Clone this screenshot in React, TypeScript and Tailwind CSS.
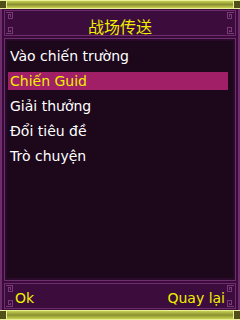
import React from "react";

const Key = ({ className }: { className: string }) => (
  <svg className={className} width="7" height="7" viewBox="0 0 7 7" shapeRendering="crispEdges">
    <path d="M0 0.5H6.5V6.5H2.5V2.5H4.5V4.5" fill="none" stroke="#7a3a7a" strokeWidth="1" />
  </svg>
);

const GoldBar = ({ h }: { h: string }) => (
  <div className={`${h} w-full border-y border-[#e8f098] bg-[linear-gradient(to_bottom,#c8d050,#8a9030_50%,#c8d050)] flex items-stretch justify-between`}>
    <div className="w-[7px] border-r border-[#e8f098] bg-[#505018]" />
    <div className="w-[7px] border-l border-[#e8f098] bg-[#505018]" />
  </div>
);

export default function App() {
  const items = ["Vào chiến trường", "Chiến Guid", "Giải thưởng", "Đổi tiêu đề", "Trò chuyện"];
  return (
    <div className="w-[240px] h-[320px] bg-[#3a0b3a] flex flex-col overflow-hidden" style={{ fontFamily: '"DejaVu Sans", "Noto Sans CJK SC", sans-serif' }}>
      <GoldBar h="h-[9px]" />
      <div className="flex-1 flex flex-col border-x-2 border-[#6e2e6e] px-[2px] py-[1px] gap-[2px]">
        <div className="relative h-[26px] border border-[#6e2e6e] bg-[#3c0c3c] flex items-center justify-center">
          <Key className="absolute left-[1px] top-[1px]" />
          <Key className="absolute right-[1px] top-[1px] -scale-x-100" />
          <Key className="absolute left-[1px] bottom-[1px] -scale-y-100" />
          <Key className="absolute right-[1px] bottom-[1px] scale-[-1]" />
          <span className="text-[16px] leading-[16px] text-[#f0f000] pt-[5px]" style={{ fontFamily: '"Noto Sans CJK SC", sans-serif' }}>战场传送</span>
        </div>
        <div className="flex-1 border border-[#6e2e6e] bg-[#2a0a2a] p-[2px]">
          <div className="h-full bg-[#1c071b] pt-[6px] pl-[1px] pr-[5px] flex flex-col">
            {items.map((t, i) => (
              <div
                key={t}
                className={`h-[18px] mb-[7px] pl-[2px] flex items-center text-[14px] leading-none ${i === 1 ? "bg-[#a01f66] text-[#f0f000]" : "text-white"}`}
              >
                {t}
              </div>
            ))}
          </div>
        </div>
        <div className="relative h-[26px] border border-[#6e2e6e] bg-[#3c0c3c] flex items-center justify-between px-[10px] pt-[4px]">
          <Key className="absolute left-[1px] top-[1px]" />
          <Key className="absolute right-[1px] top-[1px] -scale-x-100" />
          <Key className="absolute left-[1px] bottom-[1px] -scale-y-100" />
          <Key className="absolute right-[1px] bottom-[1px] scale-[-1]" />
          <span className="text-[14px] leading-none text-[#f0f000]">Ok</span>
          <span className="text-[14px] leading-none text-[#f0f000]">Quay lại</span>
        </div>
      </div>
      <GoldBar h="h-[10px]" />
    </div>
  );
}
